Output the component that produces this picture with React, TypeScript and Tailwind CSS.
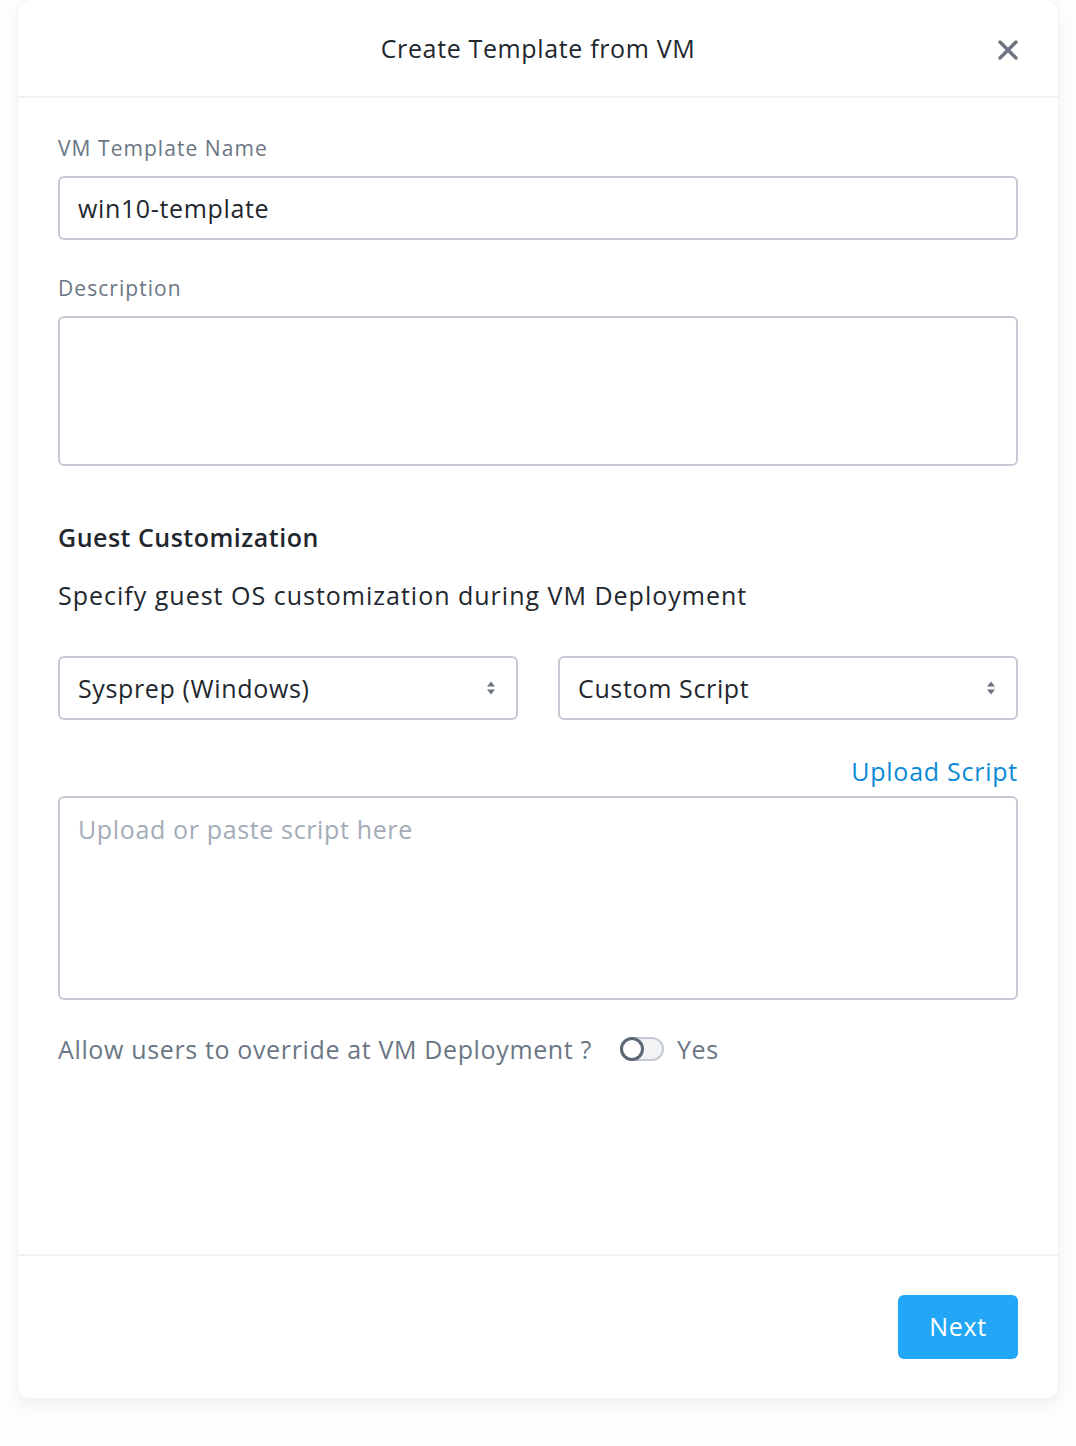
function SelectBox({ value }: { value: string }) {
  return (
    <div className="flex h-16 flex-1 items-center justify-between rounded-md border-2 border-[#c5cad3] bg-white pl-[18px] pr-[20px]">
      <span className="text-[25px] leading-8 text-[#22272e]">{value}</span>
      <svg width="10" height="16" viewBox="0 0 10 16" className="text-[#6b7480]">
        <path d="M5 1.5 L9 6.5 H1 Z" fill="currentColor" />
        <path d="M5 14.5 L9 9.5 H1 Z" fill="currentColor" />
      </svg>
    </div>
  );
}

export default function App() {
  return (
    <div className="min-h-screen bg-[#fdfdfd] px-[18px] pb-12 font-['Open_Sans',sans-serif] tracking-[0.04em]">
      <div className="flex h-[1398px] flex-col rounded-xl bg-white shadow-[0_8px_16px_rgba(0,0,0,0.05)] ring-1 ring-[#f2f2f2]">
        <header className="relative flex h-[98px] shrink-0 items-center justify-center border-b-2 border-[#f2f2f2]">
          <h1 className="text-[25px] leading-8 text-[#22272e]">Create Template from VM</h1>
          <button className="absolute right-[40px] top-[40px] text-[#6b7480]">
            <svg width="20" height="20" viewBox="0 0 20 20">
              <path d="M2 2 L18 18 M18 2 L2 18" stroke="currentColor" strokeWidth="3.4" strokeLinecap="round" />
            </svg>
          </button>
        </header>

        <div className="flex-1 px-10 pt-[36px]">
          <label className="block text-[21px] leading-7 tracking-[0.05em] text-[#6b7684]">VM Template Name</label>
          <div className="mt-[14px] flex h-16 items-center rounded-md border-2 border-[#c5cad3] px-[18px]">
            <span className="text-[25px] leading-8 text-[#22272e]">win10-template</span>
          </div>

          <label className="mt-[34px] block text-[21px] leading-7 tracking-[0.05em] text-[#6b7684]">Description</label>
          <div className="mt-[14px] h-[150px] rounded-md border-2 border-[#c5cad3]" />

          <h2 className="mt-[55px] text-[25px] font-semibold leading-8 tracking-[0.02em] text-[#22272e]">Guest Customization</h2>
          <p className="mt-[26px] text-[25px] leading-8 tracking-[0.04em] text-[#22272e]">
            Specify guest OS customization during VM Deployment
          </p>

          <div className="mt-[45px] flex gap-10">
            <SelectBox value="Sysprep (Windows)" />
            <SelectBox value="Custom Script" />
          </div>

          <div className="mt-[35px] flex justify-end">
            <a className="text-[25px] leading-8 tracking-[0.03em] text-[#0b8ad8]">Upload Script</a>
          </div>
          <div className="mt-[9px] h-[204px] rounded-md border-2 border-[#c5cad3] px-[18px] pt-[15px]">
            <span className="text-[25px] leading-8 text-[#a3acb8]">Upload or paste script here</span>
          </div>

          <div className="mt-[33px] flex items-center">
            <span className="text-[25px] leading-8 text-[#6b7684]">Allow users to override at VM Deployment ?</span>
            <span className="ml-[28px] flex h-[24px] w-[44px] items-center rounded-full border-2 border-[#c5cad3] bg-[#f1f3f5]">
              <span className="-ml-[2px] h-[24px] w-[24px] rounded-full border-[3px] border-[#5c6675] bg-white" />
            </span>
            <span className="ml-[13px] text-[25px] leading-8 text-[#6b7684]">Yes</span>
          </div>
        </div>

        <footer className="flex h-[144px] shrink-0 items-center justify-end border-t-2 border-[#f2f2f2] px-10">
          <button className="h-16 w-[120px] rounded-md bg-[#22a7f6] text-[25px] text-white">Next</button>
        </footer>
      </div>
    </div>
  );
}
